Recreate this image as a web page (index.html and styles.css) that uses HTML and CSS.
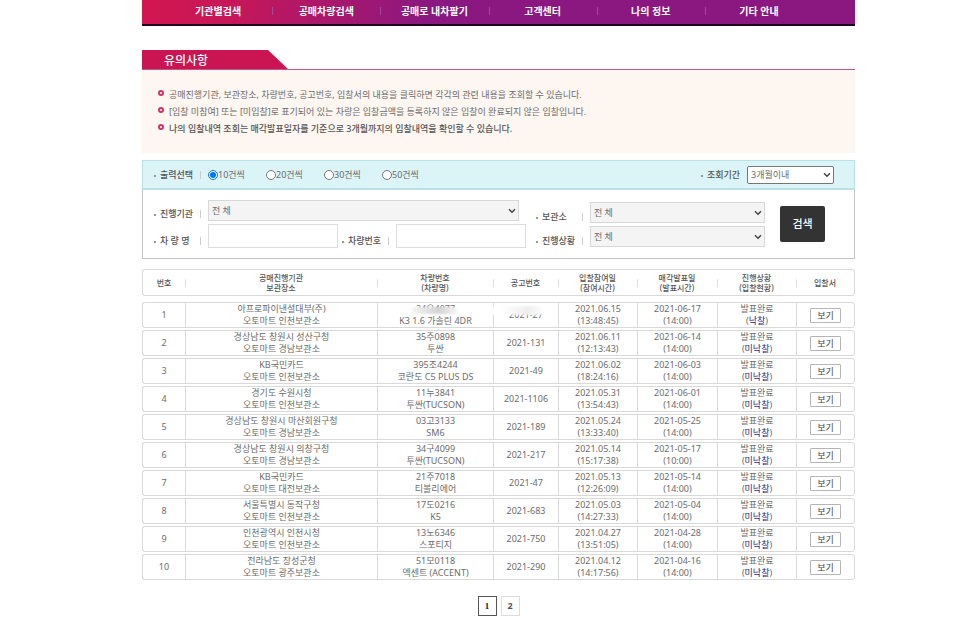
FILE: index.html
```html
<!DOCTYPE html>
<html lang="ko">
<head>
<meta charset="utf-8">
<title>나의 입찰내역</title>
<link rel="stylesheet" href="styles.css">
</head>
<body>
<nav class="nav">
  <a href="#">기관별검색</a><a href="#">공매차량검색</a><a href="#">공매로 내차팔기</a><a href="#">고객센터</a><a href="#">나의 정보</a><a href="#">기타 안내</a>
</nav>
<main>
<section class="notice">
  <div class="notice-head"><h2>유의사항</h2></div>
  <ul>
    <li>공매진행기관, 보관장소, 차량번호, 공고번호, 입찰서의 내용을 클릭하면 각각의 관련 내용을 조회할 수 있습니다.</li>
    <li>[입찰 미참여] 또는 [미입찰]로 표기되어 있는 차량은 입찰금액을 등록하지 않은 입찰이 완료되지 않은 입찰입니다.</li>
    <li class="strong">나의 입찰내역 조회는 매각발표일자를 기준으로 3개월까지의 입찰내역을 확인할 수 있습니다.</li>
  </ul>
</section>

<form class="filter">
  <div class="filter-top">
    <span class="label" id="count-label">출력선택</span>
    <div class="radios" role="radiogroup" aria-labelledby="count-label">
      <label><input type="radio" name="count" checked>10건씩</label>
      <label><input type="radio" name="count">20건씩</label>
      <label><input type="radio" name="count">30건씩</label>
      <label><input type="radio" name="count">50건씩</label>
    </div>
    <label class="label plain" for="period">조회기간</label>
    <div class="select period"><select id="period"><option>3개월이내</option></select><svg viewBox="0 0 8 6"><path d="M1 1.2 4 4.2 7 1.2"/></svg></div>
  </div>
  <div class="filter-body">
    <div class="fields">
      <label class="label" for="agency">진행기관</label>
      <div class="select agency"><select id="agency"><option>전 체</option></select><svg viewBox="0 0 8 6"><path d="M1 1.2 4 4.2 7 1.2"/></svg></div>
      <label class="label" for="car">차 량 명</label>
      <div class="pair">
        <input id="car" type="text">
        <label class="label" for="plate">차량번호</label>
        <input id="plate" type="text">
      </div>
    </div>
    <div class="fields side">
      <label class="label" for="storage">보관소</label>
      <div class="select"><select id="storage"><option>전 체</option></select><svg viewBox="0 0 8 6"><path d="M1 1.2 4 4.2 7 1.2"/></svg></div>
      <label class="label" for="state">진행상황</label>
      <div class="select"><select id="state"><option>전 체</option></select><svg viewBox="0 0 8 6"><path d="M1 1.2 4 4.2 7 1.2"/></svg></div>
    </div>
    <button class="search" type="submit">검색</button>
  </div>
</form>

<table class="list">
  <colgroup><col class="c1"><col class="c2"><col class="c3"><col class="c4"><col class="c5"><col class="c6"><col class="c7"><col class="c8"></colgroup>
  <thead>
    <tr><th>번호</th><th>공매진행기관<br>보관장소</th><th>차량번호<br>(차량명)</th><th>공고번호</th><th>입찰참여일<br>(참여시간)</th><th>매각발표일<br>(발표시간)</th><th>진행상황<br>(입찰현황)</th><th>입찰서</th></tr>
  </thead>
  <tbody>
    <tr><td>1</td><td>아프로파이낸셜대부(주)<br>오토마트 인천보관소</td><td><span class="masked plate">24오4077</span><br>K3 1.6 가솔린 4DR</td><td><span class="masked number">2021-27</span></td><td>2021.06.15<br>(13:48:45)</td><td>2021-06-17<br>(14:00)</td><td>발표완료<br>(<b>낙찰</b>)</td><td><button type="button">보기</button></td></tr>
    <tr><td>2</td><td>경상남도 창원시 성산구청<br>오토마트 경남보관소</td><td>35주0898<br>투싼</td><td>2021-131</td><td>2021.06.11<br>(12:13:43)</td><td>2021-06-14<br>(14:00)</td><td>발표완료<br>(<b>미낙찰</b>)</td><td><button type="button">보기</button></td></tr>
    <tr><td>3</td><td>KB국민카드<br>오토마트 인천보관소</td><td>395조4244<br>코란도 C5 PLUS DS</td><td>2021-49</td><td>2021.06.02<br>(18:24:16)</td><td>2021-06-03<br>(14:00)</td><td>발표완료<br>(<b>미낙찰</b>)</td><td><button type="button">보기</button></td></tr>
    <tr><td>4</td><td>경기도 수원시청<br>오토마트 인천보관소</td><td>11누3841<br>투싼(TUCSON)</td><td>2021-1106</td><td>2021.05.31<br>(13:54:43)</td><td>2021-06-01<br>(14:00)</td><td>발표완료<br>(<b>미낙찰</b>)</td><td><button type="button">보기</button></td></tr>
    <tr><td>5</td><td>경상남도 창원시 마산회원구청<br>오토마트 경남보관소</td><td>03고3133<br>SM6</td><td>2021-189</td><td>2021.05.24<br>(13:33:40)</td><td>2021-05-25<br>(14:00)</td><td>발표완료<br>(<b>미낙찰</b>)</td><td><button type="button">보기</button></td></tr>
    <tr><td>6</td><td>경상남도 창원시 의창구청<br>오토마트 경남보관소</td><td>34구4099<br>투싼(TUCSON)</td><td>2021-217</td><td>2021.05.14<br>(15:17:38)</td><td>2021-05-17<br>(10:00)</td><td>발표완료<br>(<b>미낙찰</b>)</td><td><button type="button">보기</button></td></tr>
    <tr><td>7</td><td>KB국민카드<br>오토마트 대전보관소</td><td>21주7018<br>티볼리에어</td><td>2021-47</td><td>2021.05.13<br>(12:26:09)</td><td>2021-05-14<br>(14:00)</td><td>발표완료<br>(<b>미낙찰</b>)</td><td><button type="button">보기</button></td></tr>
    <tr><td>8</td><td>서울특별시 동작구청<br>오토마트 인천보관소</td><td>17도0216<br>K5</td><td>2021-683</td><td>2021.05.03<br>(14:27:33)</td><td>2021-05-04<br>(14:00)</td><td>발표완료<br>(<b>미낙찰</b>)</td><td><button type="button">보기</button></td></tr>
    <tr><td>9</td><td>인천광역시 인천시청<br>오토마트 인천보관소</td><td>13노6346<br>스포티지</td><td>2021-750</td><td>2021.04.27<br>(13:51:05)</td><td>2021-04-28<br>(14:00)</td><td>발표완료<br>(<b>미낙찰</b>)</td><td><button type="button">보기</button></td></tr>
    <tr><td>10</td><td>전라남도 장성군청<br>오토마트 광주보관소</td><td>51모0118<br>엑센트 (ACCENT)</td><td>2021-290</td><td>2021.04.12<br>(14:17:56)</td><td>2021-04-16<br>(14:00)</td><td>발표완료<br>(<b>미낙찰</b>)</td><td><button type="button">보기</button></td></tr>
  </tbody>
</table>
<div class="pages"><a class="current" href="#">1</a><a href="#">2</a></div>
</main>
</body>
</html>
```
FILE: styles.css
```css
*, *::before, *::after { box-sizing: border-box; }
body {
  margin: 0;
  padding: 0 111px 0 142px;
  background: #fff;
  color: #6c6c6c;
  font: 9px/12px "Noto Sans", "Noto Sans CJK KR", sans-serif;
}
input, select, button { font: inherit; color: inherit; margin: 0; }
a { color: inherit; text-decoration: none; }

.nav {
  display: flex;
  height: 26px;
  padding: 0 42px 0 22px;
  border-bottom: 2px solid #1d0420;
  background: linear-gradient(100deg, #d4164f 0, #c4175a 14%, #8b1880 40%);
}
.nav a {
  flex: 1 1 0;
  position: relative;
  color: #fff;
  font-size: 10px;
  font-weight: 700;
  line-height: 22px;
  text-align: center;
  white-space: nowrap;
}
.nav a + a::before {
  content: "";
  position: absolute;
  left: 0;
  top: 7px;
  width: 1px;
  height: 8px;
  background: #a8479a;
}

.notice { margin-top: 24px; }
.notice-head { border-bottom: 1px solid #c0588a; }
.notice h2 {
  width: 146px;
  height: 19px;
  margin: 0;
  padding-left: 22px;
  background: #cb1553;
  clip-path: polygon(0 0, 126px 0, 100% 100%, 0 100%);
  color: #fff;
  font-size: 12px;
  font-weight: 500;
  line-height: 21px;
}
.notice ul {
  margin: 0;
  padding: 16px 16px;
  background: #fdf6f1;
  list-style: none;
}
.notice li {
  position: relative;
  padding-left: 11px;
  line-height: 17px;
}
.notice li::before {
  content: "";
  position: absolute;
  left: 0;
  top: 4px;
  width: 6px;
  height: 6px;
  border: 2px solid #cf3468;
  border-radius: 50%;
  background: #fff;
}
.notice .strong { color: #555; font-weight: 500; }

.filter { margin-top: 7px; border: 1px solid #c4c4c4; }
.filter-top {
  display: flex;
  align-items: center;
  height: 30px;
  margin: -1px -1px 0;
  padding: 0 20px 0 11px;
  border: solid #b9e1e6;
  border-width: 1px 1px 2px;
  background: #dbf4f7;
}
.label {
  position: relative;
  width: 54px;
  padding-left: 6px;
  color: #555;
  font-weight: 500;
  white-space: nowrap;
}
.label::before {
  content: "";
  position: absolute;
  left: 0;
  top: 6px;
  width: 2px;
  height: 2px;
  background: #999;
}
.label::after {
  content: "";
  position: absolute;
  right: 7px;
  top: 2px;
  width: 1px;
  height: 8px;
  background: #ccc;
}
.label.plain { width: auto; margin-right: 7px; }
.label.plain::after { content: none; }
.radios { display: flex; flex: 1; }
.radios label { display: flex; align-items: center; width: 58px; white-space: nowrap; }
.radios input { width: 10px; height: 10px; }

.select { position: relative; display: flex; }
.select select {
  appearance: none;
  width: 100%;
  height: 21px;
  padding: 0 16px 0 3px;
  border: 1px solid #d8d8d8;
  border-radius: 0;
  background: #f4f4f4;
}
.select svg {
  position: absolute;
  right: 3px;
  top: calc(50% - 3px);
  width: 8px;
  height: 6px;
  fill: none;
  stroke: #444;
  stroke-width: 1.5;
}
.period { width: 87px; }
.period select { height: 18px; border-color: #777; border-radius: 2px; background: #fff; }

.filter-body { display: flex; padding: 10px 29px 10px 11px; }
.fields {
  display: grid;
  flex: 1;
  min-width: 0;
  grid-template-columns: 54px minmax(0, 1fr);
  row-gap: 3px;
}
.fields > .label { align-self: end; margin-bottom: 1px; }
.agency { margin-right: 7px; }
.pair { display: flex; align-items: end; }
.pair input {
  flex: 1;
  min-width: 0;
  height: 24px;
  border: 1px solid #ddd;
  background: #fff;
}
.pair .label { margin: 0 0 1px 4px; }
.side { flex: 0 0 229px; margin: 2px 15px 0 10px; align-content: start; }
.side .label { margin-bottom: 0; }
.search {
  flex: none;
  align-self: start;
  width: 45px;
  height: 36px;
  margin-top: 6px;
  padding: 0;
  border: 0;
  border-radius: 2px;
  background: #333;
  color: #fff;
  font-size: 11px;
  font-weight: 500;
}

.list {
  width: 100%;
  margin-top: 8px;
  border-collapse: separate;
  border-spacing: 0 2px;
  table-layout: fixed;
  text-align: center;
}
.c1 { width: 43px; }
.c3 { width: 116px; }
.c4 { width: 65px; }
.c5 { width: 79px; }
.c6 { width: 80px; }
.c7 { width: 79px; }
.c8 { width: 59px; }
th, td {
  height: 26px;
  padding: 0;
  border: solid #d9d9d9;
  border-width: 1px 0 1px 1px;
  white-space: nowrap;
}
th:first-child, td:first-child { border-radius: 3px 0 0 3px; }
th:last-child, td:last-child { border-right-width: 1px; border-radius: 0 3px 3px 0; }
th {
  position: relative;
  height: 27px;
  border-left-width: 0;
  color: #555;
  font-size: 8px;
  font-weight: 500;
  line-height: 10px;
}
th:first-child { border-left-width: 1px; }
th + th::before {
  content: "";
  position: absolute;
  left: 0;
  top: 9px;
  width: 1px;
  height: 8px;
  background: #ddd;
}
tbody::before { content: ""; display: table-row; height: 2px; }
td b { color: #26267c; font-weight: 400; }
td button {
  display: block;
  width: 31px;
  height: 15px;
  margin: 0 auto;
  padding: 0;
  border: 1px solid #b5b5b5;
  border-radius: 1px;
  background: #fff;
  color: #444;
  line-height: 11px;
}
.masked { position: relative; }
.masked::after { content: ""; position: absolute; }
.plate::after {
  left: -4px;
  right: -2px;
  top: 5px;
  height: 7px;
  border-radius: 4px;
  background: linear-gradient(90deg, #f4f4f4, #d4d4d4 60%, #f4f4f4);
  filter: blur(1px);
}
.number::after {
  left: -22px;
  right: -2px;
  top: -2px;
  height: 9px;
  border-radius: 4px;
  background: linear-gradient(90deg, #fff 25%, #eee 70%, #fff);
  filter: blur(1px);
}

.pages { display: flex; gap: 4px; justify-content: center; margin-top: 14px; }
.pages a {
  width: 19px;
  height: 20px;
  border: 1px solid #ddd;
  color: #555;
  font-weight: 700;
  line-height: 18px;
  text-align: center;
}
.pages .current { border-color: #555; color: #222; font-family: "Liberation Serif", serif; }
```
